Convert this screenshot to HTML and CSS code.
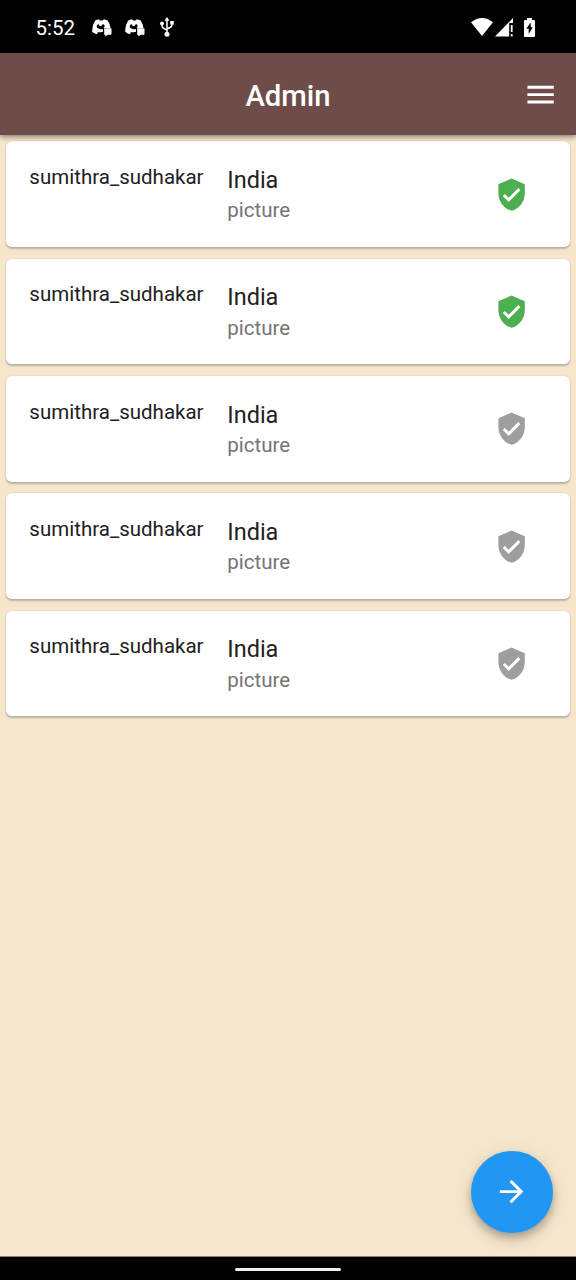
FILE: index.html
```html
<!DOCTYPE html>
<html lang="en">
<head>
<meta charset="utf-8">
<title>Admin</title>
<link rel="stylesheet" href="styles.css">
</head>
<body>
<svg class="defs" aria-hidden="true">
  <symbol id="shield" viewBox="0 0 24 24"><path d="M12 1L3 5v6c0 5.55 3.84 10.74 9 12 5.16-1.26 9-6.45 9-12V5l-9-4zm-2 16l-4-4 1.410-1.410L10 14.170l6.590-6.590L18 9l-8 8z"/></symbol>
  <symbol id="chat" viewBox="0 0 20 18"><path fill-rule="evenodd" d="M3.200 1.500Q5 .4 7 .2L8 1.400H10.800L11.700 .2Q14 .4 15.600 1.500Q18.300 5 18.500 9H11.300Q12.600 8.500 12.600 7Q12.600 5.200 11.200 5.200T9.300 7.200Q8.500 6.900 7.700 7.200Q7.600 5.200 6.300 5.200T4.700 7.200Q4.800 9.400 6.600 9.400Q8.300 10.500 11 10.200V12.800Q8.500 13.700 6 12.900L5 15.200Q2 14.500.2 12.800Q-.2 6.500 3.200 1.500Z"/><path d="M12.200 9.300H18.800Q19.500 9.300 19.500 10V15Q19.500 15.700 18.800 15.700H15.800L13.300 17.500V15.700H12.200Z"/></symbol>
</svg>
<div class="screen">
  <header class="status">
    <span class="clock">5:52</span>
    <svg class="chat" viewBox="0 0 20 18"><use href="#chat"/></svg>
    <svg class="chat chat-second" viewBox="0 0 20 18"><use href="#chat"/></svg>
    <svg class="usb" viewBox="0 0 14 20"><path class="wire" d="M7 2v15M2 6.500v2Q2 10.500 4 11.500L7 13.500M12 6v1.500Q12 9.500 10 10.500L7 12"/><path d="M7 0l2.500 3.700h-5zM10.200 4h3.600v3.600h-3.600z"/><circle cx="2" cy="6.500" r="1.900"/><circle cx="7" cy="17.300" r="2.500"/></svg>
    <svg class="wifi" viewBox="0 0 22 18"><path d="M0 4.300Q11-4.300 22 4.300L11 18Z"/></svg>
    <svg class="signal" viewBox="0 0 19 19"><path d="M0 18.500L18 0V5H14.200V18.500ZM15.800 7h1.800v7h-1.800zM15.800 16h1.800v2.500h-1.800z"/></svg>
    <svg class="battery" viewBox="0 0 11 19"><path fill-rule="evenodd" d="M3 0h5v2H10q1 0 1 1v15q0 1-1 1H1q-1 0-1-1V3q0-1 1-1h2zM6.700 4.500L2.200 10.800h2.500V16L8.800 9.200H6.700z"/></svg>
  </header>
  <div class="appbar">
    <h1 class="title">Admin</h1>
    <svg class="menu" viewBox="0 0 24 24"><path d="M3 18h18v-2H3v2zm0-5h18v-2H3v2zm0-7v2h18V6H3z"/></svg>
  </div>
  <main class="list">
    <article class="card"><span class="user">sumithra_sudhakar</span><div class="info"><div class="place">India</div><div class="kind">picture</div></div><svg class="shield verified"><use href="#shield"/></svg></article>
    <article class="card"><span class="user">sumithra_sudhakar</span><div class="info"><div class="place">India</div><div class="kind">picture</div></div><svg class="shield verified"><use href="#shield"/></svg></article>
    <article class="card"><span class="user">sumithra_sudhakar</span><div class="info"><div class="place">India</div><div class="kind">picture</div></div><svg class="shield"><use href="#shield"/></svg></article>
    <article class="card"><span class="user">sumithra_sudhakar</span><div class="info"><div class="place">India</div><div class="kind">picture</div></div><svg class="shield"><use href="#shield"/></svg></article>
    <article class="card"><span class="user">sumithra_sudhakar</span><div class="info"><div class="place">India</div><div class="kind">picture</div></div><svg class="shield"><use href="#shield"/></svg></article>
  </main>
  <button class="fab" aria-label="Next"><svg class="arrow" viewBox="0 0 24 24"><path d="M12 4l-1.410 1.410L16.170 11H4v2h12.170l-5.580 5.590L12 20l8-8z"/></svg></button>
  <footer class="navbar"><div class="handle"></div></footer>
</div>
</body>
</html>
```
FILE: styles.css
```css
* { box-sizing: border-box; }
body { margin: 0; font-family: Roboto, sans-serif; }
svg { display: block; fill: currentColor; flex: none; }
.defs { position: absolute; width: 0; height: 0; }
.screen {
  position: relative;
  display: flex;
  flex-direction: column;
  width: 576px;
  height: 1280px;
  overflow: hidden;
  background: #f5e6cc;
}
.status {
  display: flex;
  align-items: center;
  height: 53px;
  padding: 1px 40px 0 35.500px;
  background: #000;
  color: #fff;
}
.clock { width: 56.500px; padding-top: 1px; font-size: 20.500px; }
.chat { width: 20px; height: 18px; margin-top: 1px; }
.chat-second { margin-left: 12.500px; }
.usb { width: 14px; height: 20px; margin-left: 15.500px; }
.wire { fill: none; stroke: currentColor; stroke-width: 1.500; }
.wifi { width: 22px; height: 18px; margin-left: auto; }
.signal { width: 19px; height: 19px; margin-left: 2px; }
.battery { width: 11px; height: 19px; margin: 0 1px 0 10px; }
.appbar {
  position: relative;
  z-index: 1;
  display: grid;
  grid-template-columns: 1fr auto 1fr;
  align-items: center;
  height: 82px;
  padding: 0 18px;
  background: #6d4c4a;
  color: #fff;
  box-shadow: 0 2px 7px rgba(0, 0, 0, .3), 0 1px 4px rgba(0, 0, 0, .25);
}
.title {
  grid-column: 2;
  margin: 4px 0 0;
  font-size: 29.300px;
  font-weight: 500;
  line-height: 34px;
}
.menu { width: 35.200px; height: 35.200px; margin-top: 2px; justify-self: end; }
.list {
  display: flex;
  flex: 1;
  flex-direction: column;
  gap: 11.730px;
  padding: 6.300px 5.870px 0;
}
.card {
  display: flex;
  align-items: flex-start;
  height: 105.600px;
  padding: 23.700px 41px 0 23.500px;
  border-radius: 5.870px;
  background: #fff;
  box-shadow: 0 1.500px 2px rgba(0, 0, 0, .22), 0 0 2px rgba(0, 0, 0, .08);
}
.user {
  width: 198px;
  color: #212121;
  font-size: 20.500px;
  line-height: 24px;
}
.info { flex: 1; padding-top: 1px; }
.place { color: #212121; font-size: 23.460px; line-height: 28px; }
.kind { margin-top: 4.500px; color: #757575; font-size: 20.500px; line-height: 24px; }
.shield { width: 35.200px; height: 35.200px; margin-top: 11.700px; color: #9e9e9e; }
.verified { color: #4caf50; }
.fab {
  position: absolute;
  right: 23.500px;
  bottom: 47px;
  display: flex;
  align-items: center;
  justify-content: center;
  width: 82px;
  height: 82px;
  padding: 0;
  border: 0;
  border-radius: 50%;
  background: #2196f3;
  color: #fff;
  box-shadow: 0 4px 7px rgba(0, 0, 0, .2), 0 8px 14px rgba(0, 0, 0, .12), 0 1px 22px rgba(0, 0, 0, .06);
}
.arrow { width: 35.200px; height: 35.200px; }
.navbar {
  display: flex;
  align-items: center;
  justify-content: center;
  height: 24px;
  padding-top: 2px;
  border-top: 1px solid #8a8276;
  background: #000;
}
.handle { width: 106px; height: 3px; border-radius: 1.500px; background: #eceff1; }
```
